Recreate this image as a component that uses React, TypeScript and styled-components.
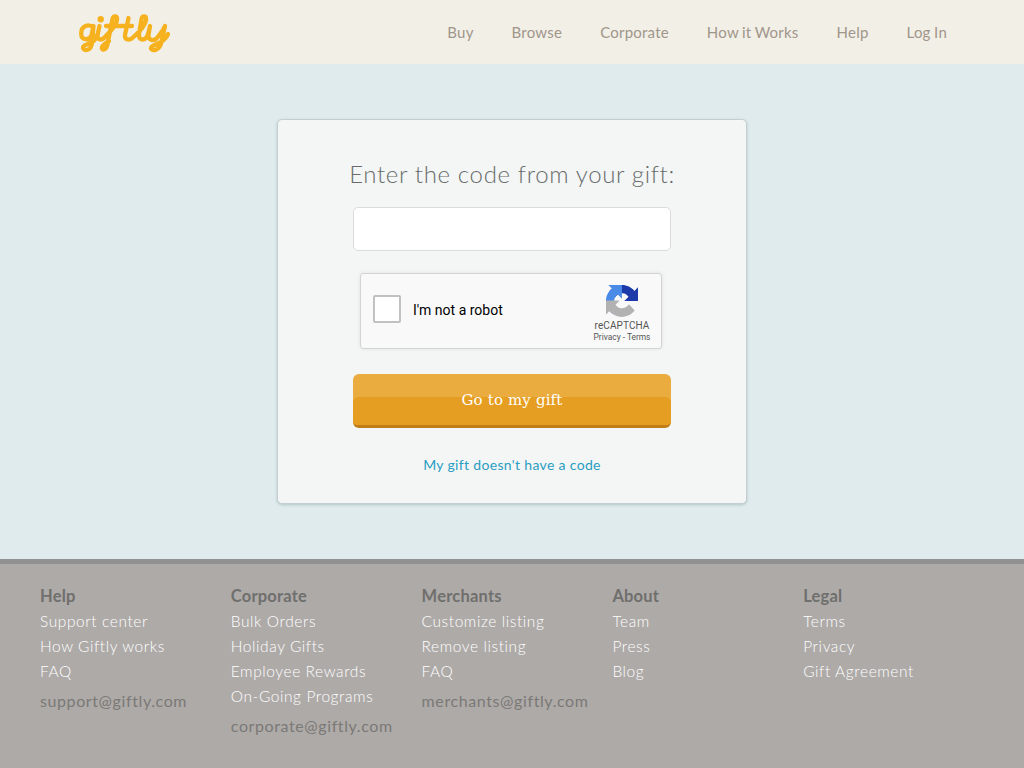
import React from 'react';
import styled, { createGlobalStyle } from 'styled-components';

const GlobalStyle = createGlobalStyle`
  html, body {
    margin: 0;
    padding: 0;
    background: #e0ebed;
    font-family: Lato, 'Open Sans', sans-serif;
  }
  * {
    box-sizing: border-box;
  }
`;

const Header = styled.header`
  display: flex;
  align-items: center;
  justify-content: space-between;
  height: 64px;
  padding: 0 77px 0 78px;
  background: #f2efe7;
`;

const Logo = styled.svg`
  display: block;
  width: 92px;
  height: 40px;
  margin-top: 1px;
`;

const Nav = styled.nav`
  display: flex;
  gap: 38px;
`;

const NavLink = styled.a`
  color: #a0968b;
  font-size: 15px;
  letter-spacing: 0.22px;
  word-spacing: -0.6px;
  line-height: 20px;
`;

const Main = styled.main`
  display: flex;
  justify-content: center;
  height: 495px;
  padding-top: 55px;
`;

const Card = styled.section`
  display: flex;
  flex-direction: column;
  align-items: center;
  width: 470px;
  height: 385px;
  padding-top: 39px;
  background: #f3f6f5;
  border: 1px solid #c3d0d3;
  border-radius: 5px;
  box-shadow: 0 1px 3px rgba(120, 150, 155, 0.45);
`;

const Title = styled.h1`
  margin: 0;
  color: #686b6a;
  font-size: 24px;
  font-weight: 300;
  letter-spacing: 0.65px;
  line-height: 30px;
`;

const CodeInput = styled.input`
  display: block;
  width: 318px;
  height: 44px;
  margin-top: 18px;
  background: #fff;
  border: 1px solid #dcdcdc;
  border-radius: 5px;
`;

const Captcha = styled.div`
  display: flex;
  align-items: center;
  width: 302px;
  height: 76px;
  margin: 22px 2px 0 0;
  padding: 0 10px 4px 12px;
  background: #f9f9f9;
  border: 1px solid #d3d3d3;
  border-radius: 3px;
  box-shadow: 0 0 4px rgba(0, 0, 0, 0.08);
`;

const CaptchaBox = styled.div`
  width: 28px;
  height: 28px;
  background: #fff;
  border: 2px solid #c1c1c1;
  border-radius: 2px;
`;

const CaptchaLabel = styled.span`
  flex: 1;
  margin-left: 12px;
  padding-top: 2px;
  color: #000;
  font-family: Roboto, sans-serif;
  font-size: 14px;
`;

const CaptchaBrand = styled.div`
  display: flex;
  flex-direction: column;
  align-items: center;
  align-self: flex-start;
  width: 58px;
  padding-top: 11px;
  color: #555;
  font-family: Roboto, sans-serif;
`;

const CaptchaIcon = styled.svg`
  display: block;
  width: 32px;
  height: 32px;
`;

const CaptchaName = styled.div`
  margin-top: 2px;
  font-size: 10px;
  letter-spacing: 0.1px;
  line-height: 13px;
`;

const CaptchaLinks = styled.div`
  font-size: 8.4px;
  line-height: 11px;
  white-space: nowrap;
`;

const SubmitButton = styled.button`
  position: relative;
  display: block;
  width: 318px;
  height: 54px;
  margin-top: 25px;
  padding: 0;
  overflow: hidden;
  background: #eaab3f;
  border: 0;
  border-bottom: 3px solid #bf7f16;
  border-radius: 6px;
  color: #fff;
  font-family: 'DejaVu Serif', serif;
  font-size: 15px;
  letter-spacing: 0.15px;

  &::before {
    content: '';
    position: absolute;
    left: 0;
    right: 0;
    top: 23px;
    bottom: 0;
    background: #e69e22;
    border-radius: 6px 6px 0 0;
  }
`;

const SubmitLabel = styled.span`
  position: relative;
`;

const NoCode = styled.a`
  margin-top: 28px;
  color: #2a9dc2;
  font-size: 14px;
  letter-spacing: 0.33px;
  line-height: 18px;
`;

const Footer = styled.footer`
  display: grid;
  grid-template-columns: repeat(5, 190.8px);
  height: 209px;
  padding: 19px 0 0 40px;
  overflow: hidden;
  background: #aeaaa8;
  border-top: 5px solid #919191;
`;

const Column = styled.div`
  display: flex;
  flex-direction: column;
  align-items: flex-start;
`;

const ColumnTitle = styled.div`
  color: #6f6f6d;
  font-size: 16.5px;
  font-weight: 700;
  letter-spacing: 0.2px;
  line-height: 26px;
`;

const FooterLink = styled.a`
  color: #fff;
  font-size: 15.5px;
  font-weight: 300;
  letter-spacing: 0.58px;
  line-height: 25px;
`;

const FooterMail = styled.a`
  margin-top: 4px;
  color: #7a7976;
  font-size: 16px;
  letter-spacing: 0.6px;
  line-height: 25px;
`;

const navItems = ['Buy', 'Browse', 'Corporate', 'How it Works', 'Help', 'Log In'];

const columns = [
  { title: 'Help', links: ['Support center', 'How Giftly works', 'FAQ'], mail: 'support@giftly.com' },
  { title: 'Corporate', links: ['Bulk Orders', 'Holiday Gifts', 'Employee Rewards', 'On-Going Programs'], mail: 'corporate@giftly.com' },
  { title: 'Merchants', links: ['Customize listing', 'Remove listing', 'FAQ'], mail: 'merchants@giftly.com' },
  { title: 'About', links: ['Team', 'Press', 'Blog'] },
  { title: 'Legal', links: ['Terms', 'Privacy', 'Gift Agreement'] },
];

function GiftlyLogo() {
  return (
    <Logo viewBox="0 0 92 40" fill="none" stroke="#f5b21e" strokeWidth="4.3" strokeLinecap="round" strokeLinejoin="round">
      <path d="M15 14.5 C11 10.5 3.2 12.5 3.2 20.5 C3.2 27.5 11 28 13.5 22.5 L15.5 13 L14 30 C13 38 6 38.5 5 35 C4.5 32 11 31 15 28.5 C17 27 18 25 19.5 22" />
      <path d="M21.5 13 L19.5 22 C19 27 23 27.5 26 25 C31 20 38.5 13 39 7 C39.5 2.5 35.5 2.5 34.5 6 L29.5 31 C28.5 38 23 37.5 24 34 C25 31.5 28 30 31 28" />
      <circle cx="22.7" cy="6.3" r="1.6" strokeWidth="3.2" />
      <path d="M28 13 H54" />
      <path d="M50.5 5 L47 22 C46.5 27.5 52 27.5 55 24.5 C60 20 67.5 12 68 7 C68.5 2.5 64.5 2.5 63.5 6 L61 21 C60.5 27 65 27.5 68 25 C70 23 71 18 72 13 L70.5 22 C70 27.5 76 28.5 79 25 C82 21 85 18 87 13 L83.5 29 C81.5 38 74 38.5 73 35.5 C72.5 33 78 31.5 83 29 C86 27 89 24 90 21" />
    </Logo>
  );
}

function RecaptchaLogo() {
  return (
    <CaptchaIcon viewBox="0 0 64 64">
      <path fill="#1c3aa9" d="M64 31.955l-.033-1.37V4.687l-7.16 7.16C50.948 4.674 42.033.093 32.05.093c-10.4 0-19.622 4.96-25.458 12.64l11.736 11.86a15.55 15.55 0 0 1 4.754-5.334c2.05-1.6 4.952-2.906 8.968-2.906.485 0 .86.057 1.135.163 4.976.393 9.288 3.14 11.828 7.124l-8.307 8.307L64 31.953" />
      <path fill="#4a8be8" d="M31.862 0l-1.37.033H4.594l7.16 7.16C4.58 13.05 0 21.967 0 31.95c0 10.4 4.96 19.622 12.64 25.458l11.86-11.736a15.55 15.55 0 0 1-5.334-4.754c-1.6-2.05-2.906-4.952-2.906-8.968 0-.485.057-.86.163-1.135.393-4.976 3.14-9.288 7.124-11.828l8.307 8.307L31.86 0" />
      <path fill="#b2b2b2" d="M.001 31.953l.033 1.37v25.898l7.16-7.16c5.86 7.173 14.774 11.754 24.76 11.754 10.4 0 19.622-4.96 25.458-12.64L45.676 38.3a15.55 15.55 0 0 1-4.754 5.334c-2.05 1.6-4.952 2.906-8.968 2.906-.485 0-.86-.057-1.135-.163-4.976-.393-9.288-3.14-11.828-7.124l8.307-8.307-27.295.007" />
    </CaptchaIcon>
  );
}

export default function App() {
  return (
    <>
      <GlobalStyle />
      <Header>
        <GiftlyLogo />
        <Nav>
          {navItems.map((item) => (
            <NavLink key={item}>{item}</NavLink>
          ))}
        </Nav>
      </Header>
      <Main>
        <Card>
          <Title>Enter the code from your gift:</Title>
          <CodeInput type="text" />
          <Captcha>
            <CaptchaBox />
            <CaptchaLabel>I'm not a robot</CaptchaLabel>
            <CaptchaBrand>
              <RecaptchaLogo />
              <CaptchaName>reCAPTCHA</CaptchaName>
              <CaptchaLinks>Privacy - Terms</CaptchaLinks>
            </CaptchaBrand>
          </Captcha>
          <SubmitButton type="button">
            <SubmitLabel>Go to my gift</SubmitLabel>
          </SubmitButton>
          <NoCode>My gift doesn't have a code</NoCode>
        </Card>
      </Main>
      <Footer>
        {columns.map((col) => (
          <Column key={col.title}>
            <ColumnTitle>{col.title}</ColumnTitle>
            {col.links.map((link) => (
              <FooterLink key={link}>{link}</FooterLink>
            ))}
            {col.mail && <FooterMail>{col.mail}</FooterMail>}
          </Column>
        ))}
      </Footer>
    </>
  );
}
